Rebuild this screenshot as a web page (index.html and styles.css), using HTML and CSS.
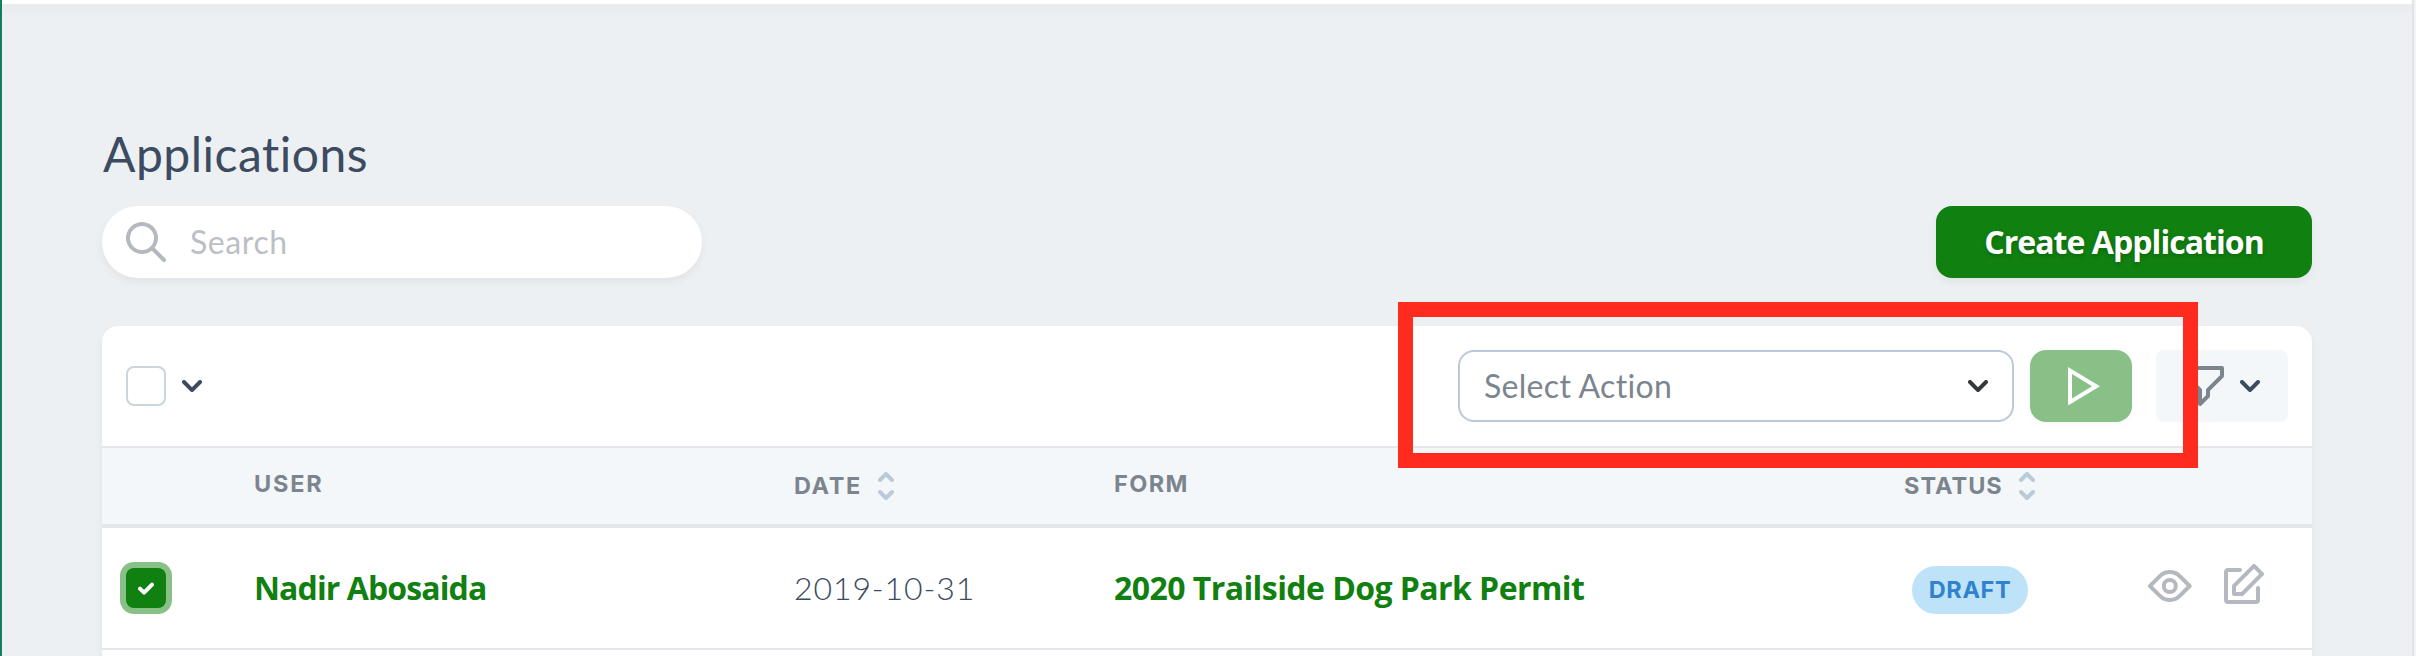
FILE: index.html
```html
<!DOCTYPE html>
<html lang="en">
<head>
<meta charset="utf-8">
<title>Applications</title>
<link rel="stylesheet" href="styles.css">
</head>
<body>
<svg class="defs" width="0" height="0">
  <symbol id="chevron" viewBox="0 0 10 6"><path d="M8.293.293a1 1 0 0 1 1.414 1.414l-4 4a1 1 0 0 1-1.414 0l-4-4A1 1 0 0 1 1.707.293L5 3.586 8.293.293z"/></symbol>
  <symbol id="sort" viewBox="0 0 8 14"><path fill="none" stroke="currentColor" stroke-width="2" stroke-linecap="round" stroke-linejoin="round" d="M1 4l3-3 3 3M1 10l3 3 3-3"/></symbol>
</svg>
<div class="app">
  <header class="topbar"></header>
  <main class="content">
    <h1 class="title">Applications</h1>
    <div class="controls">
      <label class="search">
        <svg class="icon-search" viewBox="0 0 20 20"><path d="M14.32 12.906l5.387 5.387a1 1 0 0 1-1.414 1.414l-5.387-5.387a8 8 0 1 1 1.414-1.414zM8 14A6 6 0 1 0 8 2a6 6 0 0 0 0 12z"/></svg>
        <span class="search-text">Search</span>
      </label>
      <button class="create"><span>Create Application</span></button>
    </div>
    <section class="card">
      <div class="toolbar">
        <span class="checkbox"></span>
        <svg class="chevron"><use href="#chevron"/></svg>
        <div class="actions">
          <div class="select"><span class="select-text">Select Action</span><svg class="chevron dark"><use href="#chevron"/></svg></div>
          <button class="run"><svg class="icon-play" viewBox="0 0 32 38.6"><path fill-rule="evenodd" d="M0 0l32 19.3L0 38.6zM4 7v24.6l20-12.3z"/></svg></button>
          <button class="filter">
            <svg class="icon-filter" viewBox="0 0 20 20"><path d="M.293 5.707A1 1 0 0 1 0 5V1a1 1 0 0 1 1-1h18a1 1 0 0 1 1 1v4a1 1 0 0 1-.293.707L13 12.413v2.585a1 1 0 0 1-.293.708l-4 4c-.63.629-1.707.183-1.707-.708v-6.585L.293 5.707zM2 2v2.585l6.707 6.707A1 1 0 0 1 9 12v4.585l2-2V12a1 1 0 0 1 .293-.707L18 4.585V2H2z"/></svg>
            <svg class="chevron"><use href="#chevron"/></svg>
          </button>
          <div class="highlight"></div>
        </div>
      </div>
      <div class="row head">
        <span></span>
        <span class="th th-user">USER</span>
        <span class="th th-date sortable">DATE<svg class="sort"><use href="#sort"/></svg></span>
        <span class="th th-form">FORM</span>
        <span class="th th-status sortable">STATUS<svg class="sort"><use href="#sort"/></svg></span>
        <span></span>
      </div>
      <div class="row item">
        <span class="cell-check"><span class="checkbox checked"><svg class="icon-check" viewBox="0 0 16 13"><path fill="none" stroke="#fff" stroke-width="4" stroke-linecap="round" stroke-linejoin="round" d="M2 6.6l4.1 4L14 2.6"/></svg></span></span>
        <a class="link user">Nadir Abosaida</a>
        <span class="date">2019-10-31</span>
        <a class="link form">2020 Trailside Dog Park Permit</a>
        <span class="cell-status"><span class="badge">DRAFT</span></span>
        <span class="row-actions">
          <svg class="icon-view" viewBox="0 0 22 16"><path d="M16.56 13.66a8 8 0 0 1-11.32 0L.3 8.7a1 1 0 0 1 0-1.42l4.95-4.95a8 8 0 0 1 11.32 0l4.95 4.95a1 1 0 0 1 0 1.42l-4.95 4.95-.01.01zm-9.9-1.42a6 6 0 0 0 8.48 0L19.38 8l-4.24-4.24a6 6 0 0 0-8.48 0L2.4 8l4.25 4.24h.01zM10.9 12a4 4 0 1 1 0-8 4 4 0 0 1 0 8zm0-2a2 2 0 1 0 0-4 2 2 0 0 0 0 4z"/></svg>
          <svg class="icon-edit" viewBox="0 0 20 20"><path d="M4.3 10.3l10-10a1 1 0 0 1 1.4 0l4 4a1 1 0 0 1 0 1.4l-10 10a1 1 0 0 1-.7.3H5a1 1 0 0 1-1-1v-4a1 1 0 0 1 .3-.7zM6 14h2.59l9-9L15 2.41l-9 9V14zm10-2a1 1 0 0 1 2 0v6a2 2 0 0 1-2 2H2a2 2 0 0 1-2-2V4c0-1.1.9-2 2-2h6a1 1 0 1 1 0 2H2v14h14v-6z"/></svg>
        </span>
      </div>
      <div class="row next"></div>
    </section>
  </main>
</div>
</body>
</html>
```

FILE: styles.css
```css
* { box-sizing: border-box; }
body { margin: 0; height: 656px; overflow: hidden; background: #f4f4f4; font-family: Lato, "Open Sans", sans-serif; color: #3c4b5f; }
button { border: 0; padding: 0; margin: 0; font: inherit; }
svg { display: block; flex: none; fill: currentColor; }
.defs { position: absolute; }
.app { width: 2414px; height: 656px; overflow: hidden; background: #ecf0f3; border-left: 2px solid #12805c; border-right: 2px solid #e1e3e6; }
.topbar { height: 4px; background: #fff; box-shadow: 0 4px 8px rgba(0,0,0,.05); }
.content { padding: 120px 100px 0; }
.title { margin: 0 0 22px; height: 60px; font-size: 48px; line-height: 60px; font-weight: 400; letter-spacing: .5px; padding-left: 1px; }
.controls { display: flex; justify-content: space-between; margin-bottom: 48px; }
.search { width: 600px; height: 72px; padding-left: 24px; border-radius: 36px; background: #fff; box-shadow: 0 4px 8px rgba(0,0,0,.05); display: flex; align-items: center; }
.icon-search { width: 40px; height: 40px; color: #b3b9bf; }
.search-text { margin-left: 24px; padding-bottom: 2px; font-size: 32px; letter-spacing: .6px; color: #bbc0c6; }
.create { width: 376px; height: 72px; border-radius: 16px; background: #108010; color: #fff; box-shadow: 0 4px 8px rgba(0,0,0,.05); font: 700 32px/72px "Open Sans", sans-serif; letter-spacing: -.95px; text-shadow: 0 2px 4px rgba(0,0,0,.2); }
.card { height: 400px; border-radius: 16px 16px 0 0; background: #fff; box-shadow: 0 4px 8px rgba(0,0,0,.05); }
.toolbar { height: 120px; padding: 0 24px; display: flex; align-items: center; }
.checkbox { width: 40px; height: 40px; border: 2px solid #cbd5de; border-radius: 8px; background: #fff; }
.chevron { width: 20px; height: 12px; margin-left: 16px; color: #3c4b5f; }
.chevron.dark { color: #35393c; margin: 0; }
.actions { position: relative; display: flex; margin-left: auto; }
.select { width: 556px; height: 72px; border: 2px solid #bacad9; border-radius: 16px; padding: 0 24px; display: flex; align-items: center; justify-content: space-between; }
.select-text { padding-bottom: 2px; font-size: 32px; letter-spacing: .3px; color: #7c858e; }
.run { width: 102px; height: 72px; margin-left: 16px; border-radius: 16px; background: #88c088; color: #fff; box-shadow: 0 4px 8px rgba(0,0,0,.025); padding-left: 38px; }
.icon-play { width: 32px; height: 38.6px; }
.filter { width: 132px; height: 72px; margin-left: 24px; border-radius: 8px; background: #f4f7fa; display: flex; align-items: center; padding-left: 28px; }
.icon-filter { width: 40px; height: 40px; color: #7c858e; }
.highlight { position: absolute; left: -60px; top: -48px; width: 800px; height: 166px; border: 15px solid #ff2b1e; }
.row { display: grid; grid-template-columns: 152px 540px 320px 790px 132px 1fr; }
.head { height: 82px; background: #f4f7fa; border-top: 2px solid #e3e7eb; border-bottom: 4px solid #e3e7eb; color: #7c858e; }
.th { font: 700 23.5px/32px Inter, sans-serif; padding-top: 20px; white-space: nowrap; }
.th-user { letter-spacing: 1.8px; }
.th-date { letter-spacing: 1.6px; }
.th-form { letter-spacing: 1.4px; }
.th-status { letter-spacing: 1px; }
.sortable { display: flex; align-items: flex-start; padding-top: 22px; }
.sort { width: 16px; height: 28px; margin: 2px 0 0 16px; color: #bacad9; }
.item { height: 122px; border-bottom: 2px solid #e3e7eb; line-height: 120px; white-space: nowrap; }
.cell-check { display: flex; align-items: center; padding-left: 24px; }
.checked { border: 0; background: #108010; box-shadow: 0 0 0 6px #88c088; }
.icon-check { width: 16px; height: 13px; margin: 13.5px 0 0 12px; }
.link { color: #108010; font-family: "Open Sans", sans-serif; font-weight: 700; font-size: 32px; }
.user { letter-spacing: -.9px; }
.form { letter-spacing: -.56px; }
.date { font-size: 32px; font-weight: 300; letter-spacing: .9px; }
.cell-status { display: flex; justify-content: center; align-items: center; }
.badge { width: 116px; height: 48px; border-radius: 24px; margin-top: 4px; background: #bee3f8; color: #3182ce; font: 700 23.5px/48px Inter, sans-serif; letter-spacing: .6px; text-align: center; }
.row-actions { display: flex; align-items: flex-start; padding: 36px 0 0 112px; color: #b3b9bf; }
.icon-view { width: 44px; height: 32px; margin-top: 6px; }
.icon-edit { width: 40px; height: 40px; margin-left: 32px; }
```
